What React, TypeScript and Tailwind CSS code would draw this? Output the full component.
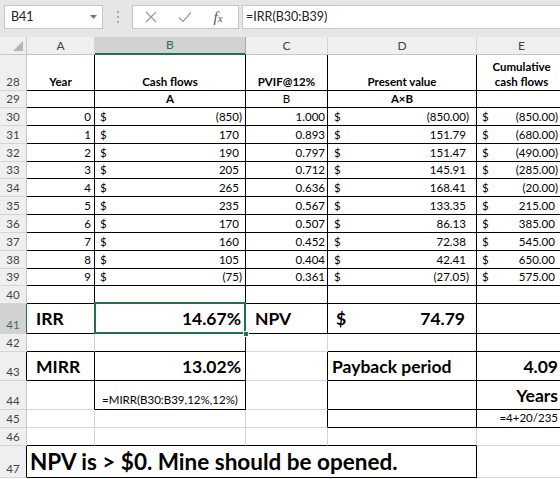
import React from "react";

const F = "font-['Lato',_'Liberation_Sans',_sans-serif]";

type CellProps = {
  r?: boolean;
  b?: boolean;
  className?: string;
  children?: React.ReactNode;
};

function C({ r, b, className = "", children }: CellProps) {
  return (
    <div
      className={`border-r border-b ${r ? "border-r-black" : "border-r-[#d4d4d4]"} ${
        b ? "border-b-black" : "border-b-[#d4d4d4]"
      } bg-white flex items-end overflow-visible whitespace-nowrap text-[11.5px] leading-[15px] text-black ${className}`}
    >
      {children}
    </div>
  );
}

function RH({ n, sel, r, className = "" }: { n: number; sel?: boolean; r?: boolean; className?: string }) {
  return (
    <div
      className={`border-b border-b-[#d4d4d4] border-r ${
        sel ? "border-r-[#217346] bg-[#d2d2d2] text-[#3c6e50]" : r ? "border-r-black bg-[#efefef] text-[#444]" : "border-r-[#c6c6c6] bg-[#efefef] text-[#444]"
      } flex items-end justify-center text-[11.5px] leading-[15px] pb-[1px] ${className}`}
    >
      {n}
    </div>
  );
}

function Acc({ v, neg, pr = "pr-[3px]", pl = "pl-[5px]" }: { v: string; neg?: boolean; pr?: string; pl?: string }) {
  return (
    <div className={`flex w-full justify-between ${pl} ${pr} pb-[1px]`}>
      <span>$</span>
      <span>
        {v}
        {!neg && <span className="invisible">)</span>}
      </span>
    </div>
  );
}

const data: [number, string, string, string, string][] = [
  [0, "(850)", "1.000", "(850.00)", "(850.00)"],
  [1, "170", "0.893", "151.79", "(680.00)"],
  [2, "190", "0.797", "151.47", "(490.00)"],
  [3, "205", "0.712", "145.91", "(285.00)"],
  [4, "265", "0.636", "168.41", "(20.00)"],
  [5, "235", "0.567", "133.35", "215.00"],
  [6, "170", "0.507", "86.13", "385.00"],
  [7, "160", "0.452", "72.38", "545.00"],
  [8, "105", "0.404", "42.41", "650.00"],
  [9, "(75)", "0.361", "(27.05)", "575.00"],
];

const isNeg = (s: string) => s.startsWith("(");

export default function App() {
  return (
    <div className={`w-[560px] h-[479px] overflow-hidden bg-white ${F}`}>
      {/* Formula bar */}
      <div className="h-[37px] bg-[#e6e6e6] flex items-start pt-[5px]">
        <div className="ml-[4px] w-[99px] h-[24px] bg-white border border-[#c6c6c6] flex items-center justify-between pl-[6px] pr-[5px]">
          <span className="text-[12.5px] text-[#222]">B41</span>
          <svg width="7" height="4" viewBox="0 0 7 4">
            <path d="M0 0 L7 0 L3.5 4 Z" fill="#777" />
          </svg>
        </div>
        <div className="w-[29px] h-[24px] flex flex-col items-center justify-center gap-[3px]">
          <span className="w-[2px] h-[2px] bg-[#aaa]" />
          <span className="w-[2px] h-[2px] bg-[#aaa]" />
          <span className="w-[2px] h-[2px] bg-[#aaa]" />
        </div>
        <div className="w-[107px] h-[24px] bg-white border border-[#c6c6c6] flex items-center">
          <div className="w-[36px] flex justify-center">
            <svg width="12" height="12" viewBox="0 0 12 12">
              <path d="M1 1 L11 11 M11 1 L1 11" stroke="#9a9a9a" strokeWidth="1.2" fill="none" />
            </svg>
          </div>
          <div className="w-[32px] flex justify-center">
            <svg width="14" height="12" viewBox="0 0 14 12">
              <path d="M1 6.5 L5 10.5 L13 1.5" stroke="#9a9a9a" strokeWidth="1.2" fill="none" />
            </svg>
          </div>
          <div className="w-[34px] flex justify-center">
            <span className="font-['Liberation_Serif',_serif] italic text-[15px] text-[#555] leading-none">
              f<span className="text-[11px]">x</span>
            </span>
          </div>
        </div>
        <div className="ml-[3px] flex-1 h-[24px] bg-white border border-[#c6c6c6] border-r-0 flex items-center pl-[3px]">
          <span className="text-[12.5px] text-[#222]">=IRR(B30:B39)</span>
        </div>
      </div>

      {/* Sheet */}
      <div className="grid grid-cols-[27px_68px_151px_82px_149px_90px] grid-rows-[18px_35.5px_17.5px_repeat(11,17.85px)_30px_17.5px_29px_29px_18px_18px_32px]">
        {/* Column headers */}
        <div className="bg-[#efefef] border-r border-b border-[#c6c6c6] relative">
          <svg className="absolute right-[3px] bottom-[3px]" width="10" height="10" viewBox="0 0 10 10">
            <path d="M10 0 L10 10 L0 10 Z" fill="#b4b4b4" />
          </svg>
        </div>
        {["A", "B", "C", "D", "E"].map((l) =>
          l === "B" ? (
            <div
              key={l}
              className="bg-[#d2d2d2] border-r border-r-[#ababab] border-b-2 border-b-[#217346] flex items-center justify-center text-[12px] text-[#217346]"
            >
              {l}
            </div>
          ) : (
            <div
              key={l}
              className="bg-[#efefef] border-r border-r-[#d4d4d4] border-b border-b-[#c6c6c6] flex items-center justify-center text-[12px] text-[#444]"
            >
              {l}
            </div>
          )
        )}

        {/* Row 28 */}
        <RH n={28} />
        <C r b className="justify-center font-bold pb-[1px]">Year</C>
        <C r b className="justify-center font-bold pb-[1px]">Cash flows</C>
        <C r b className="justify-center font-bold pb-[1px]">PVIF@12%</C>
        <C r b className="justify-center font-bold pb-[1px]">Present value</C>
        <C r b className="justify-center font-bold pb-[1px] text-center whitespace-normal">
          <span>
            Cumulative
            <br />
            cash flows
          </span>
        </C>

        {/* Row 29 */}
        <RH n={29} />
        <C r b />
        <C r b className="justify-center font-bold pb-[1px]">A</C>
        <C r b className="justify-center pb-[1px]">B</C>
        <C r b className="justify-center font-bold pb-[1px] text-[10px]">A×B</C>
        <C r b />

        {/* Rows 30-39 */}
        {data.map(([y, cf, pv, pres, cum], i) => (
          <React.Fragment key={y}>
            <RH n={30 + i} />
            <C r b className="justify-end pr-[3px] pb-[1px]">{y}</C>
            <C r b>
              <Acc v={cf} neg={isNeg(cf)} pr="pr-[3px]" />
            </C>
            <C r b className="justify-end pr-[2px] pb-[1px]">{pv}</C>
            <C r b>
              <Acc v={pres} neg={isNeg(pres)} pr="pr-[7px]" pl="pl-[6px]" />
            </C>
            <C r b>
              <Acc v={cum} neg={isNeg(cum)} pr="pr-[8px]" pl="pl-[5px]" />
            </C>
          </React.Fragment>
        ))}

        {/* Row 40 */}
        <RH n={40} />
        <C r b />
        <C r />
        <C r b />
        <C r b />
        <C r b />

        {/* Row 41 */}
        <RH n={41} sel />
        <C r b className="text-[17.5px] leading-[22px] font-bold pl-[9px] pb-[3px]">IRR</C>
        <C r b className="relative justify-end text-[17.5px] leading-[22px] font-bold pr-[4px] pb-[3px]">
          <div className="absolute -left-[1px] -top-[2px] -right-[1px] -bottom-[1px] border-2 border-[#217346] pointer-events-none" />
          <div className="absolute -right-[4px] -bottom-[4px] w-[6px] h-[6px] bg-[#217346] border border-white z-10" />
          14.67%
        </C>
        <C r b className="text-[17.5px] leading-[22px] font-bold pl-[9px] pb-[3px]">NPV</C>
        <C r b className="text-[17.5px] leading-[22px] font-bold pb-[3px]">
          <div className="flex w-full justify-between pl-[8px] pr-[11px]">
            <span>$</span>
            <span>74.79</span>
          </div>
        </C>
        <C r b />

        {/* Row 42 */}
        <RH n={42} />
        <C b />
        <C r b />
        <C />
        <C r b />
        <C b />

        {/* Row 43 */}
        <RH n={43} r />
        <C r b className="text-[17.5px] leading-[22px] font-bold pl-[9px] pb-[2px]">MIRR</C>
        <C r b className="justify-end text-[17.5px] leading-[22px] font-bold pr-[4px] pb-[2px]">13.02%</C>
        <C r />
        <C r b className="text-[17.5px] leading-[22px] font-bold pl-[4px] pb-[2px]">Payback period</C>
        <C b className="justify-end text-[17.5px] leading-[22px] font-bold pr-[8px] pb-[2px]">4.09</C>

        {/* Row 44 */}
        <RH n={44} />
        <C r />
        <C r b className="justify-center text-[10px] leading-[13px] pb-[2px]">=MIRR(B30:B39,12%,12%)</C>
        <C r />
        <C r b />
        <C b className="justify-end text-[17.5px] leading-[22px] font-bold pr-[8px] pb-[2px]">Years</C>

        {/* Row 45 */}
        <RH n={45} />
        <C />
        <C />
        <C r />
        <C r b />
        <C b className="justify-end text-[10px] leading-[13px] pr-[8px] pb-[2px]">=4+20/235</C>

        {/* Row 46 */}
        <RH n={46} />
        <C b />
        <C b />
        <C b />
        <C b />
        <C />

        {/* Row 47 */}
        <RH n={47} r />
        <div className="col-span-4 border-r border-b border-black bg-white flex items-end whitespace-nowrap text-[22.5px] leading-[28px] font-bold text-black pl-[3px] pb-[1px]">
          NPV is &gt; $0. Mine should be opened.
        </div>
        <C />
      </div>
    </div>
  );
}
